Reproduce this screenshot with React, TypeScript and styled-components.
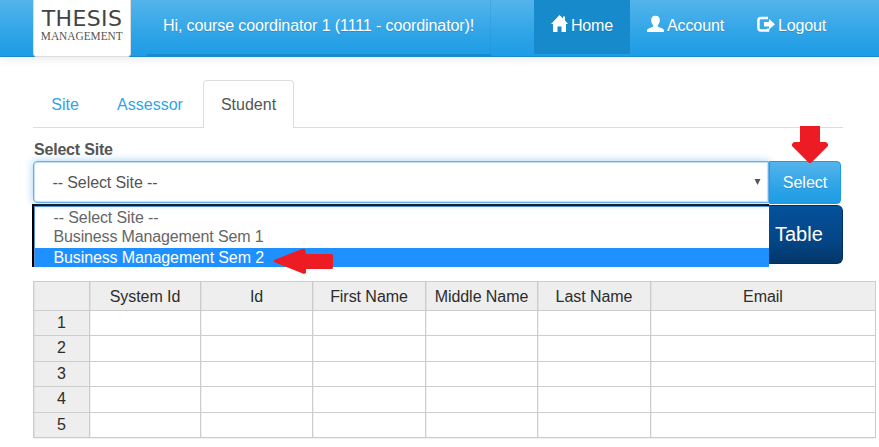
import React from "react";
import styled, { createGlobalStyle } from "styled-components";

const GlobalStyle = createGlobalStyle`
  * { box-sizing: border-box; }
  body { margin: 0; background: #fff; color: #555; font: 16px/20px "Liberation Sans", Arial, sans-serif; }
  #root { height: 447px; overflow: hidden; }
`;

const Header = styled.header`
  display: flex;
  height: 57px;
  padding-left: 33px;
  background: linear-gradient(#54b4eb, #2fa4e7 60%, #1d9ce5);
  border-bottom: 1px solid #178acc;
  box-shadow: 0 1px 10px rgba(0, 0, 0, 0.1);
  color: #fff;
  text-shadow: 0 1px 0 rgba(0, 0, 0, 0.15);
`;

const Logo = styled.div`
  display: flex;
  flex-direction: column;
  align-items: center;
  width: 98px;
  height: 57px;
  padding-top: 8px;
  background: #fff;
  border: 1px solid #ddd;
  border-top: 0;
  border-radius: 0 0 4px 4px;
  text-shadow: none;
  white-space: nowrap;
`;

const LogoTitle = styled.div`
  font: 22px/22px "DejaVu Sans", sans-serif;
  color: #444;
  letter-spacing: 0.4px;
`;

const LogoSub = styled.div`
  font: 13.5px/12px "Liberation Serif", serif;
  color: #555;
  transform: scaleX(0.84);
`;

const Greeting = styled.div`
  width: 344px;
  height: 56px;
  margin-left: 16px;
  padding: 16px 0 0 16px;
  border-right: 1px solid rgba(23, 138, 204, 0.25);
  border-bottom: 2px solid #178acc;
  white-space: nowrap;
`;

const Nav = styled.nav`
  display: flex;
  margin-left: 43px;
`;

const NavItem = styled.a<{ $width: number; $active?: boolean }>`
  display: flex;
  gap: 3px;
  width: ${(p) => p.$width}px;
  height: 54px;
  padding: 16px 0 0 17px;
  background: ${(p) => (p.$active ? "#178acc" : "transparent")};
  white-space: nowrap;
  svg { flex: none; margin-top: -1px; }
`;

const Main = styled.main`
  padding: 23px 0 0 33px;
`;

const Tabs = styled.div`
  display: flex;
  width: 810px;
  height: 48px;
  border-bottom: 1px solid #ddd;
`;

const Tab = styled.a<{ $width: number; $active?: boolean }>`
  width: ${(p) => p.$width}px;
  height: 48px;
  padding-top: 14px;
  text-align: center;
  color: ${(p) => (p.$active ? "#555" : "#2fa4e7")};
  border: ${(p) => (p.$active ? "1px solid #ddd" : "1px solid transparent")};
  border-bottom: 0;
  border-radius: 4px 4px 0 0;
  background: ${(p) => (p.$active ? "#fff" : "transparent")};
`;

const Label = styled.label`
  display: block;
  height: 33px;
  padding: 12px 0 0 1px;
  font-weight: bold;
  letter-spacing: -0.2px;
`;

const InputRow = styled.div`
  display: flex;
  position: relative;
  width: 808px;
  height: 43px;
`;

const SelectBox = styled.div`
  display: flex;
  justify-content: space-between;
  width: 736px;
  height: 42px;
  padding: 11px 7px 0 18.5px;
  border: 1px solid #66afe9;
  border-radius: 4px 0 0 4px;
  box-shadow: 0 0 8px rgba(102, 175, 233, 0.6), inset 0 0 1px 1px rgba(102, 175, 233, 0.4);
  svg { margin-top: 5px; }
`;

const SelectButton = styled.button`
  width: 72px;
  height: 43px;
  padding: 0;
  border: 1px solid #1d9ce5;
  border-radius: 0 4px 4px 0;
  background: linear-gradient(#54b4eb, #2fa4e7 60%, #1d9ce5);
  color: #fff;
  font: inherit;
  text-shadow: 0 1px 0 rgba(0, 0, 0, 0.15);
`;

const ActionRow = styled.div`
  display: flex;
  margin-top: 1px;
  height: 76px;
  margin-left: -1px;
`;

const OptionList = styled.div`
  width: 737px;
  height: 63px;
  margin-top: -1px;
  border: solid #000;
  border-width: 2px 0 0 2px;
  box-shadow: inset 1px 1px 0 #5a8bdc;
  background: #fff;
`;

const Option = styled.div<{ $height: number; $selected?: boolean }>`
  height: ${(p) => p.$height}px;
  margin-left: 1px;
  padding-left: 18.5px;
  line-height: ${(p) => (p.$selected ? 19 : 20)}px;
  color: ${(p) => (p.$selected ? "#fff" : "#666")};
  background: ${(p) => (p.$selected ? "#1e90ff" : "transparent")};
  white-space: nowrap;
  &:first-child { padding-top: 2px; }
`;

const TableButton = styled.button`
  width: 74px;
  height: 59px;
  padding: 0 0 2px 6px;
  border: 1px solid #033059;
  border-left: 0;
  border-radius: 0 6px 6px 0;
  background: linear-gradient(#04519b, #044687 60%, #033769);
  color: #fff;
  font: 20px/24px "Liberation Sans", Arial, sans-serif;
  text-align: left;
`;

const Grid = styled.div`
  display: grid;
  grid-template-columns: 56px 111px 112px 113px 112px 113px 225px;
  grid-template-rows: 29px 25px 26px 25px 26px 25px;
  width: 843px;
  border: solid #ccc;
  border-width: 1px 0 0 1px;
  color: #2c2c2c;
`;

const Cell = styled.div<{ $head?: boolean; $column?: boolean }>`
  display: flex;
  align-items: center;
  justify-content: center;
  padding: ${(p) => (p.$column ? "1px 0 0" : "0 0 2px")};
  line-height: 19px;
  border: solid #ccc;
  border-width: 0 1px 1px 0;
  box-shadow: inset 1px 0 0 rgba(0, 0, 0, 0.05), 0 1px 0 rgba(0, 0, 0, 0.06);
  background: ${(p) => (p.$head ? "#eee" : "#fff")};
  white-space: nowrap;
`;

const Text = styled.span<{ $spacing?: number }>`
  letter-spacing: ${(p) => p.$spacing ?? 0}px;
`;

const Arrow = styled.svg<{ $left: number; $top: number }>`
  position: absolute;
  left: ${(p) => p.$left}px;
  top: ${(p) => p.$top}px;
  fill: #ed1c24;
`;

const HomeIcon = () => (
  <svg width="17" height="17" viewBox="0 0 17 17" fill="#fff">
    <path d="M8.5 0 L12 3.4 V1.5 H14 V5.5 L17 9 H15 V17 H10.5 V11.5 H6.5 V17 H2 V9 H0 Z" />
  </svg>
);

const UserIcon = () => (
  <svg width="17" height="17" viewBox="0 0 17 17" fill="#fff">
    <path d="M8.5 .7 C11.5 .7 13 2.5 12.8 5.5 C12.6 8 11.7 9.2 10.8 10.2 V11.5 C12 12.8 17 13.2 17 15.5 V17 H0 V15.5 C0 13.2 5 12.8 6.2 11.5 V10.2 C5.3 9.2 4.4 8 4.2 5.5 C4 2.5 5.5 .7 8.5 .7 Z" />
  </svg>
);

const LogoutIcon = () => (
  <svg width="18" height="17" viewBox="0 0 18 17" fill="none">
    <path d="M11 3 H4 Q1.4 3 1.4 5.6 V12.8 Q1.4 15.5 4 15.5 H11 V13.5" stroke="#fff" strokeWidth="2.5" />
    <path d="M7 7 H12 V4 L18 9.2 L12 14.4 V11.4 H7 Z" fill="#fff" />
  </svg>
);

const headings = ["", "System Id", "Id", "First Name", "Middle Name", "Last Name", "Email"];
const rows = [1, 2, 3, 4, 5];

export default function App() {
  return (
    <>
      <GlobalStyle />
      <Header>
        <Logo>
          <LogoTitle>THESIS</LogoTitle>
          <LogoSub>MANAGEMENT</LogoSub>
        </Logo>
        <Greeting><Text $spacing={-0.1}>Hi, course coordinator 1 (1111 - coordinator)!</Text></Greeting>
        <Nav>
          <NavItem $width={96} $active><HomeIcon /><Text $spacing={-0.2}>Home</Text></NavItem>
          <NavItem $width={110}><UserIcon /><Text $spacing={-0.1}>Account</Text></NavItem>
          <NavItem $width={103}><LogoutIcon /><Text $spacing={-0.15}>Logout</Text></NavItem>
        </Nav>
      </Header>
      <Main>
        <Tabs>
          <Tab $width={64}>Site</Tab>
          <Tab $width={106}>Assessor</Tab>
          <Tab $width={91} $active>Student</Tab>
        </Tabs>
        <Label>Select Site</Label>
        <InputRow>
          <SelectBox>
            <Text $spacing={-0.1}>-- Select Site --</Text>
            <svg width="7" height="8"><path d="M0.5 1 H6.5 L3.5 7 Z" fill="#555" /></svg>
          </SelectBox>
          <SelectButton>Select</SelectButton>
          <Arrow $left={759} $top={-35} width="36" height="37" viewBox="0 0 36 37">
            <path d="M8 0 H28 V16 H34 L36 18 V20 L19 37 H17 L0 20 V18 L2 16 H8 Z" />
          </Arrow>
          <Arrow $left={241} $top={88} width="59" height="25" viewBox="0 0 59 25">
            <path d="M0 11 L28 0 H31 L32 5 H58 L59 6 V19 L58 20 H32 V24 L30 25 L0 13 Z" />
          </Arrow>
        </InputRow>
        <ActionRow>
          <OptionList>
            <Option $height={21}><Text $spacing={-0.1}>-- Select Site --</Text></Option>
            <Option $height={21}><Text $spacing={-0.14}>Business Management Sem 1</Text></Option>
            <Option $height={19} $selected><Text $spacing={-0.12}>Business Management Sem 2</Text></Option>
          </OptionList>
          <TableButton>Table</TableButton>
        </ActionRow>
        <Grid>
          {headings.map((h, i) => <Cell key={i} $head $column><Text $spacing={-0.05}>{h}</Text></Cell>)}
          {rows.map((r) => headings.map((h, i) => (
            <Cell key={`${r}-${i}`} $head={i === 0}>{i === 0 ? r : null}</Cell>
          )))}
        </Grid>
      </Main>
    </>
  );
}
